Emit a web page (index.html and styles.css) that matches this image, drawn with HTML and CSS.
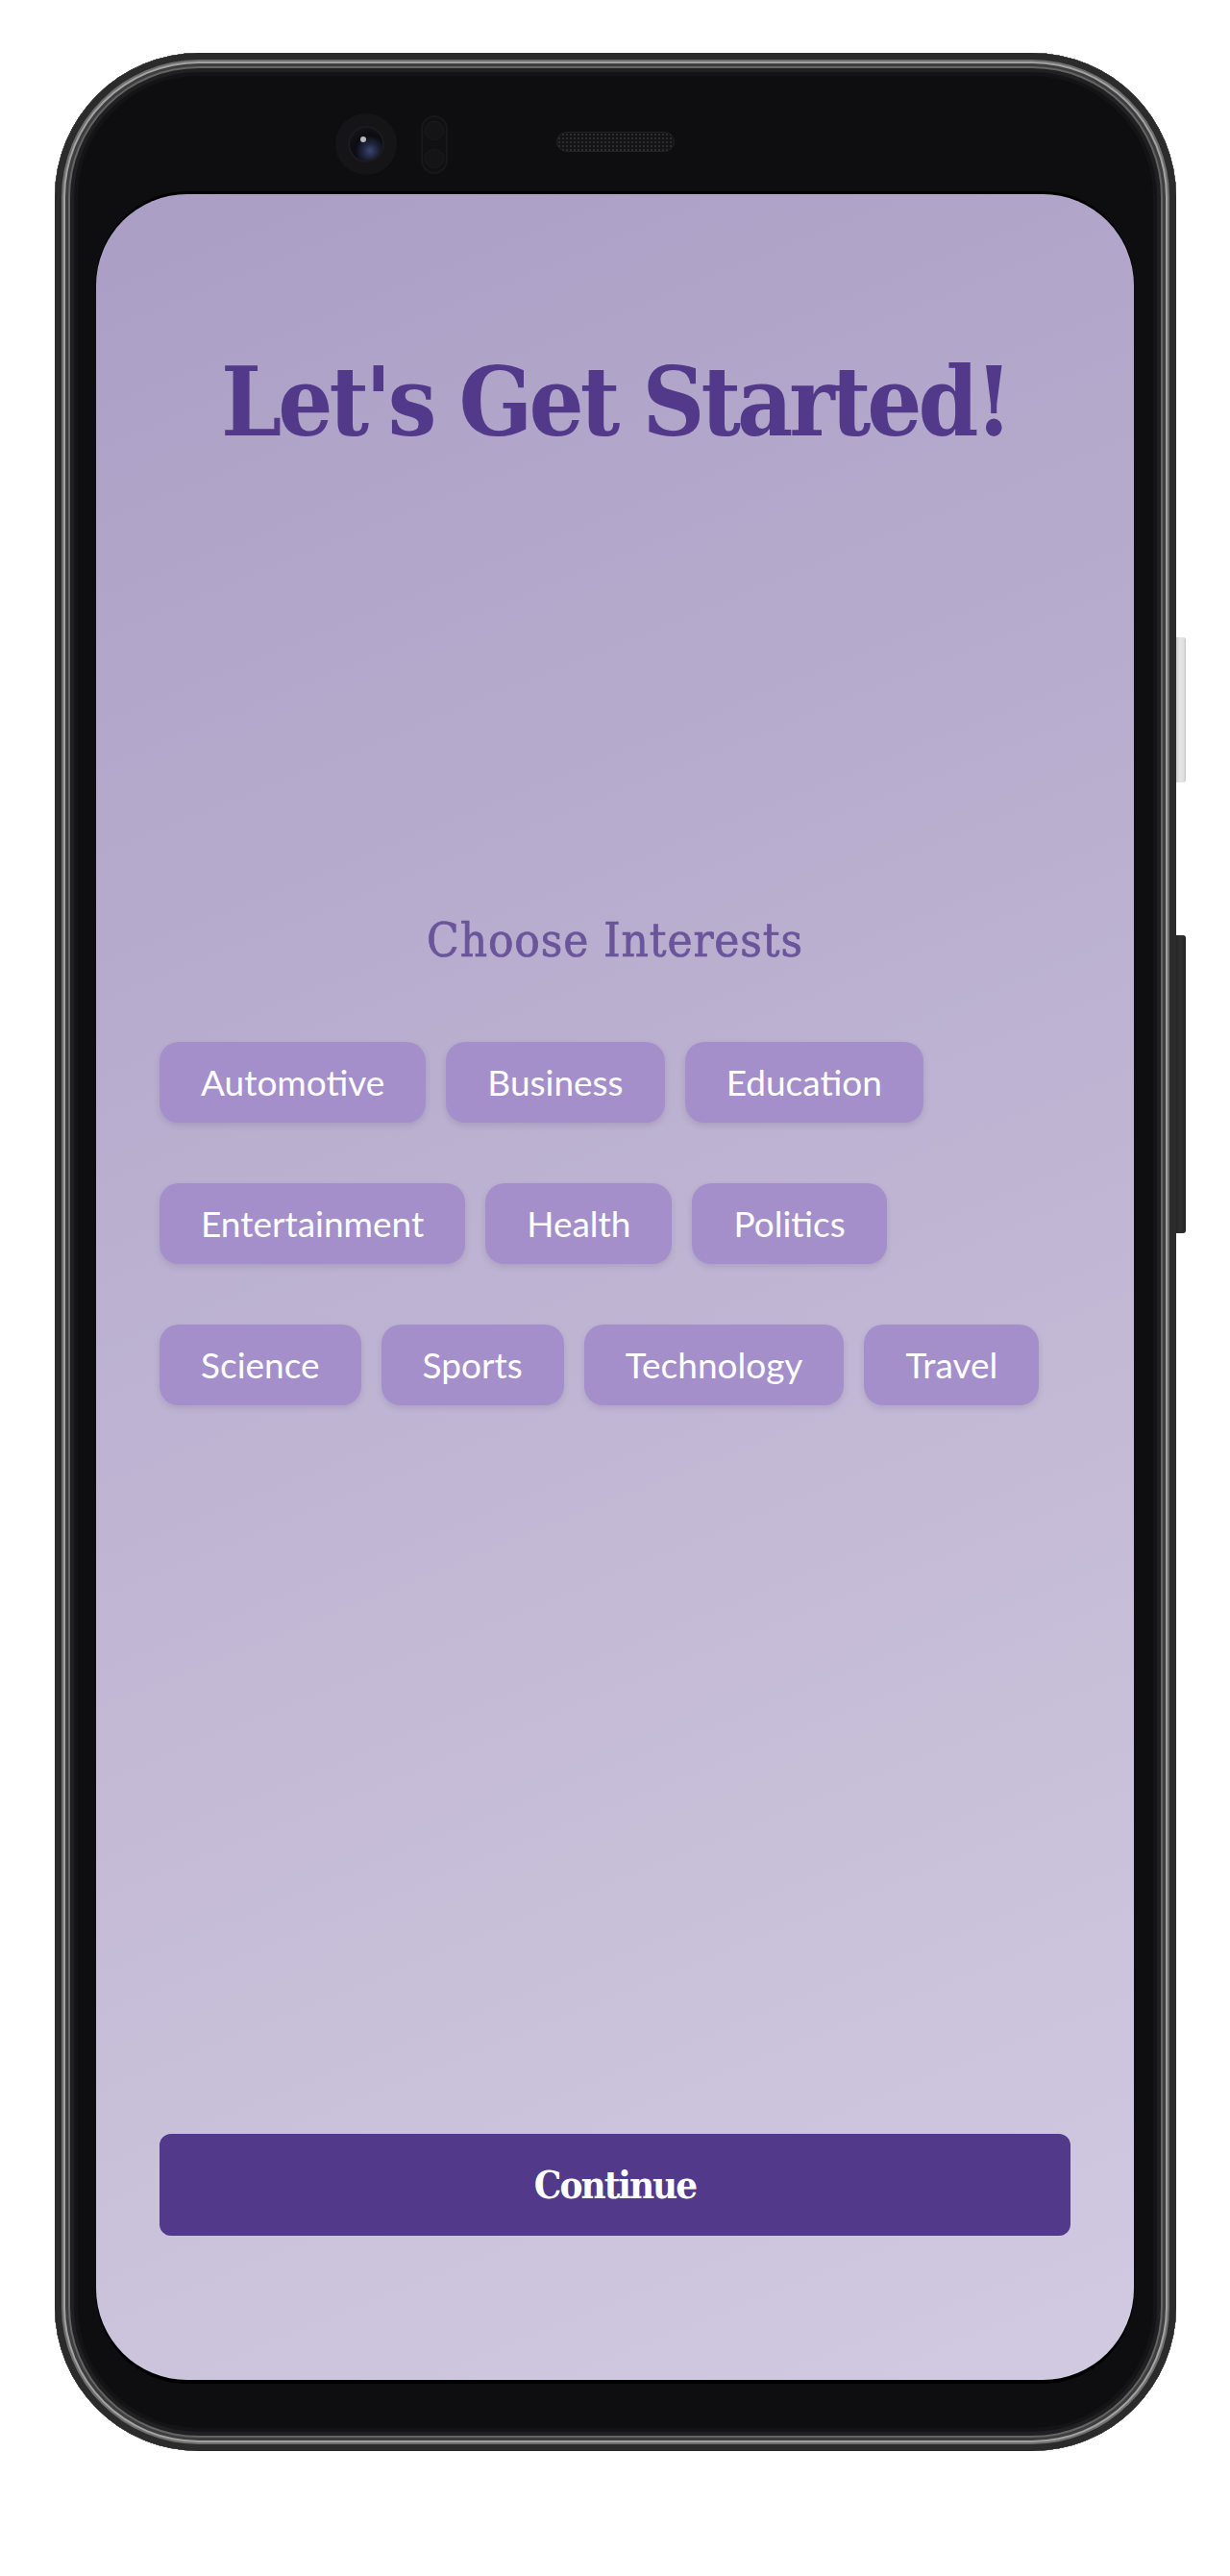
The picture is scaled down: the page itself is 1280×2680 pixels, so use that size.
FILE: index.html
```html
<!DOCTYPE html>
<html lang="en">
<head>
<meta charset="utf-8">
<title>Let's Get Started</title>
<link rel="stylesheet" href="styles.css">
</head>
<body>
<div class="stage">
  <div class="phone">
    <div class="side-btn side-btn-silver"></div>
    <div class="side-btn side-btn-power"></div>
    <div class="bezel-top">
      <div class="camera"><div class="lens"><div class="glint"></div></div></div>
      <div class="sensor"><span class="dot"></span><span class="dot"></span></div>
      <div class="speaker"></div>
    </div>
    <div class="screen">
      <h1 class="title">Let's Get Started!</h1>
      <h2 class="subtitle">Choose Interests</h2>
      <div class="chips">
        <span class="chip">Automotive</span>
        <span class="chip">Business</span>
        <span class="chip">Education</span>
        <span class="chip">Entertainment</span>
        <span class="chip">Health</span>
        <span class="chip">Politics</span>
        <span class="chip">Science</span>
        <span class="chip">Sports</span>
        <span class="chip">Technology</span>
        <span class="chip">Travel</span>
      </div>
      <button class="continue">Continue</button>
    </div>
  </div>
</div>
</body>
</html>
```

FILE: styles.css
```css
html, body {
  margin: 0;
  padding: 0;
  background: #ffffff;
}

.stage {
  padding: 55px 0 0 57px;
}

.phone {
  position: relative;
  box-sizing: border-box;
  width: 1167px;
  height: 2495px;
  padding: 0 44px 74px 43px;
  background: #0e0e10;
  border-radius: 150px;
  display: flex;
  flex-direction: column;
  box-shadow:
    inset 0 0 0 7px #2b2b2b,
    inset 0 0 0 9px #6e6e6e,
    inset 0 0 0 11px #a2a2a2,
    inset 0 0 0 14px #3e3e3e,
    inset 0 0 0 16px #646464,
    inset 0 0 0 20px #202022,
    inset 0 0 0 24px #141416;
}

.side-btn {
  position: absolute;
  left: 1167px;
  width: 10px;
  border-radius: 0 3px 3px 0;
}

.side-btn-silver {
  top: 608px;
  height: 151px;
  background: linear-gradient(90deg, #cfcfcf, #e6e6e6 40%, #dedede 80%, #c4c4c4);
}

.side-btn-power {
  top: 918px;
  height: 310px;
  background: linear-gradient(90deg, #262626, #303030 50%, #222222);
}

.bezel-top {
  height: 147px;
  flex: none;
  box-sizing: border-box;
  padding: 63px 0 0 249px;
  display: flex;
  align-items: flex-start;
}

.camera {
  width: 64px;
  height: 64px;
  border-radius: 50%;
  background: #151517;
  display: flex;
  align-items: center;
  justify-content: center;
}

.lens {
  position: relative;
  width: 34px;
  height: 34px;
  border-radius: 50%;
  background: radial-gradient(circle at 62% 70%, #3e4670 0, #232842 22%, #0b0b10 50%, #1a1a20 100%);
  box-shadow: 0 0 0 2px #1c1c20;
}

.glint {
  position: absolute;
  left: 11px;
  top: 9px;
  width: 6px;
  height: 6px;
  border-radius: 50%;
  background: #b8b8bc;
}

.sensor {
  box-sizing: border-box;
  margin: 2px 0 0 25px;
  width: 28px;
  height: 61px;
  border-radius: 14px;
  background: #111113;
  border: 2px solid #18181a;
  display: flex;
  flex-direction: column;
  justify-content: space-between;
  align-items: center;
  padding: 4px 0;
}

.dot {
  width: 18px;
  height: 18px;
  border-radius: 50%;
  background: #141416;
  border: 1px solid #1c1c1e;
}

.speaker {
  box-sizing: border-box;
  margin: 19px 0 0 113px;
  width: 123px;
  height: 21px;
  border-radius: 11px;
  border: 1px solid #232325;
  background-color: #141416;
  background-image: radial-gradient(circle, #2c2c2e 1px, transparent 1.2px);
  background-size: 4px 4px;
}

.screen {
  flex: 1;
  box-sizing: border-box;
  border-radius: 95px;
  background: linear-gradient(158deg, #ab9ec5 0%, #b8adce 35%, #c3b9d5 60%, #d2cae1 100%);
  box-shadow: 0 -3px 0 0 #000000, 0 4px 0 0 #000000;
  padding: 166px 66px 150px;
  display: flex;
  flex-direction: column;
  align-items: center;
}

.title {
  margin: 0;
  font-family: "DejaVu Serif", "Liberation Serif", serif;
  font-stretch: condensed;
  font-weight: 700;
  font-size: 100px;
  line-height: 1;
  letter-spacing: -4px;
  color: #52398a;
  white-space: nowrap;
}

.subtitle {
  margin: 486px 0 0;
  font-family: "DejaVu Serif", "Liberation Serif", serif;
  font-stretch: condensed;
  font-weight: 400;
  font-size: 49px;
  line-height: 1;
  letter-spacing: 0.9px;
  -webkit-text-stroke: 0.7px #6a559b;
  color: #6a559b;
}

.chips {
  margin-top: 81px;
  width: 100%;
  display: flex;
  flex-wrap: wrap;
  gap: 63px 21px;
}

.chip {
  display: block;
  padding: 20px 43px;
  border-radius: 20px;
  background: #a48fcb;
  color: #ffffff;
  font-family: Lato, "Noto Sans", sans-serif;
  font-size: 37px;
  line-height: 44px;
  box-shadow: 0 3px 6px rgba(60, 40, 100, 0.14);
}

.continue {
  margin-top: auto;
  width: 100%;
  height: 106px;
  border: none;
  border-radius: 12px;
  background: #52398a;
  color: #ffffff;
  font-family: "DejaVu Serif", "Liberation Serif", serif;
  font-stretch: condensed;
  font-weight: 700;
  font-size: 40px;
  line-height: 1;
  letter-spacing: -2px;
  padding: 0;
}
```
